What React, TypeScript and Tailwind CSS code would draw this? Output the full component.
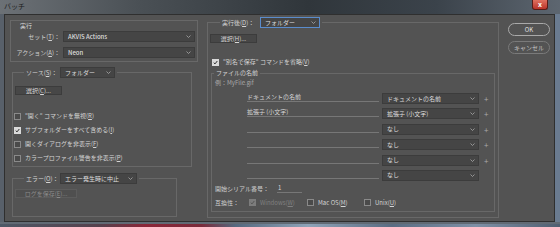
import React from "react";

const Chevron: React.FC = () => (
  <svg width="5" height="3" viewBox="0 0 5 3" className="shrink-0">
    <path d="M0.5 0.5 L2.5 2.5 L4.5 0.5" fill="none" stroke="#a8a8a8" strokeWidth="0.8" />
  </svg>
);

type SelectProps = { text: string; className: string; focused?: boolean };

const Select: React.FC<SelectProps> = ({ text, className, focused }) => (
  <div
    className={`flex h-[11px] items-center justify-between bg-[#454545] pl-[4px] pr-[3px] text-[#dedede] ${
      focused ? "border border-[#5a8ccc]" : "border border-[#3c3c3c]"
    } ${className}`}
  >
    <span className="leading-none">{text}</span>
    <Chevron />
  </div>
);

const Key: React.FC<{ k: string }> = ({ k }) => (
  <>
    (<span className="underline decoration-[0.5px] underline-offset-[1px]">{k}</span>)
  </>
);

type CheckProps = { checked?: boolean; disabled?: boolean };

const Check: React.FC<CheckProps> = ({ checked, disabled }) => {
  if (!checked) {
    return <div className="h-[7px] w-[7px] shrink-0 border border-[#8a8a8a] bg-[#4a4a4a]" />;
  }
  return (
    <div
      className={`flex h-[7px] w-[7px] shrink-0 items-center justify-center ${
        disabled ? "bg-[#7c7c7c]" : "bg-[#dadada]"
      }`}
    >
      <svg width="5" height="5" viewBox="0 0 5 5">
        <path
          d="M0.7 2.6 L2 3.9 L4.3 1"
          fill="none"
          stroke={disabled ? "#555" : "#2e2e2e"}
          strokeWidth="1"
        />
      </svg>
    </div>
  );
};

const CheckRow: React.FC<{ checked?: boolean; children: React.ReactNode }> = ({ checked, children }) => (
  <div className="flex h-[10px] items-center gap-[4px] pl-[1px]">
    <Check checked={checked} />
    <span className="leading-none text-[#d4d4d4]">{children}</span>
  </div>
);

const Button: React.FC<{ className: string; disabled?: boolean; children: React.ReactNode }> = ({
  className,
  disabled,
  children,
}) => (
  <div
    className={`flex h-[9px] items-center justify-center leading-none ${
      disabled
        ? "border border-[#5c5c5c] bg-[#4f4f4f] text-[#8a8a8a]"
        : "border border-[#3c3c3c] bg-[#474747] text-[#d8d8d8]"
    } ${className}`}
  >
    {children}
  </div>
);

const nameRows = [
  { text: "ドキュメントの名前", sel: "ドキュメントの名前", plus: true },
  { text: "拡張子 (小文字)", sel: "拡張子 (小文字)", plus: true },
  { text: "", sel: "なし", plus: true },
  { text: "", sel: "なし", plus: true },
  { text: "", sel: "なし", plus: true },
  { text: "", sel: "なし", plus: false },
];

export default function App() {
  return (
    <div className="flex h-[227px] w-[560px] flex-col overflow-hidden bg-[#5b6673] font-['Noto_Sans_CJK_JP',sans-serif] text-[6px]">
      {/* title bar */}
      <div className="flex h-[14px] shrink-0 items-start justify-between bg-[linear-gradient(to_right,#6c7176,#4a5055_25%,#30363b_55%,#3b434b_78%,#5d6670)]">
        <span className="pl-[4px] pt-[3px] text-[7px] leading-none text-[#1c1c1c]">バッチ</span>
        <div className="mr-[12px] flex h-[10px] w-[16px] items-center justify-center rounded-b-[3px] border border-t-0 border-[#5a1c16] bg-[linear-gradient(to_bottom,#e0705f,#b9342a)] text-[7px] font-bold leading-none text-white">
          x
        </div>
      </div>

      {/* window body */}
      <div className="flex shrink-0">
        <div className="w-[4px] bg-[#58606a]" />
        <div className="flex h-[208px] w-[551px] border border-[#2f2f2f] bg-[#535353]">
          {/* left column */}
          <div className="ml-[5px] mt-[5px] flex w-[188px] flex-col">
            <div className="flex h-[42px] flex-col border border-[#686868]">
              <div className="h-[10px] pl-[9px] pt-[2px] leading-none text-[#d8d8d8]">実行</div>
              <div className="flex items-center">
                <span className="w-[49px] text-right leading-none text-[#cfcfcf]">
                  セット<Key k="T" />：
                </span>
                <Select text="AKVIS Actions" className="ml-[3px] w-[132px] font-medium" />
              </div>
              <div className="mt-[5px] flex items-center">
                <span className="w-[49px] text-right leading-none text-[#cfcfcf]">
                  アクション<Key k="A" />：
                </span>
                <Select text="Neon" className="ml-[3px] w-[132px] font-medium" />
              </div>
            </div>

            <fieldset className="ml-[2px] mt-[5px] w-[180px] border border-[#686868] pb-[3px]">
              <legend className="ml-[11px] flex items-center px-[2px]">
                <span className="w-[34px] leading-none text-[#d4d4d4]">
                  ソース<Key k="S" />：
                </span>
                <Select text="フォルダー" className="w-[55px]" />
              </legend>
              <Button className="ml-[2px] mt-[8px] w-[47px]">
                選択<Key k="C" />...
              </Button>
              <div className="mt-[16px] flex flex-col gap-[4px]">
                <CheckRow>
                  "開く" コマンドを無視<Key k="R" />
                </CheckRow>
                <CheckRow checked>
                  サブフォルダーをすべて含める<Key k="I" />
                </CheckRow>
                <CheckRow>
                  開くダイアログを非表示<Key k="F" />
                </CheckRow>
                <CheckRow>
                  カラープロファイル警告を非表示<Key k="P" />
                </CheckRow>
              </div>
            </fieldset>

            <fieldset className="ml-[2px] mt-[6px] h-[44px] w-[165px] border border-[#686868]">
              <legend className="ml-[11px] flex items-center px-[2px]">
                <span className="w-[34px] leading-none text-[#d4d4d4]">
                  エラー<Key k="O" />：
                </span>
                <Select text="エラー発生時に中止" className="w-[77px]" />
              </legend>
              <Button disabled className="ml-[2px] mt-[5px] w-[62px]">
                ログを保存<Key k="E" />...
              </Button>
            </fieldset>
          </div>

          {/* destination column */}
          <fieldset className="ml-[9px] mt-[2px] h-[201px] w-[292px] border border-[#686868]">
            <legend className="ml-[12px] flex items-center px-[2px]">
              <span className="w-[38px] leading-none text-[#d4d4d4]">
                実行後<Key k="D" />：
              </span>
              <Select text="フォルダー" focused className="w-[60px]" />
            </legend>
            <Button className="ml-[2px] mt-[6px] w-[47px]">
              選択<Key k="H" />...
            </Button>
            <div className="mt-[14px] pl-[3px]">
              <CheckRow checked>
                "別名で保存" コマンドを省略<Key k="V" />
              </CheckRow>
            </div>

            <fieldset className="ml-[3px] mt-[3px] h-[142px] w-[284px] border border-[#686868]">
              <legend className="ml-[2px] px-[2px] leading-none text-[#d4d4d4]">ファイルの名前</legend>
              <div className="ml-[3px] mt-[4px] h-[8px] leading-none text-[#a9a9a9]">例：MyFile.gif</div>
              <div className="mt-[5px] flex flex-col gap-[4.4px]">
                {nameRows.map((r, i) => (
                  <div key={i} className="flex h-[11px] items-start">
                    <div className="ml-[35px] flex h-[9px] w-[132px] items-center border-b border-[#777777] leading-none text-[#d6d6d6]">
                      {r.text}
                    </div>
                    <Select text={r.sel} className="ml-[3px] w-[97px]" />
                    {r.plus && (
                      <span className="ml-[5px] text-[8px] leading-[11px] text-[#a8a8a8]">+</span>
                    )}
                  </div>
                ))}
              </div>
              <div className="mt-[3px] flex h-[10px] items-center pl-[3px]">
                <span className="w-[62px] leading-none text-[#cfcfcf]">開始シリアル番号：</span>
                <div className="flex h-[8px] w-[25px] items-center border-b border-[#777777] pl-[1px] leading-none text-[#d8d8d8]">
                  1
                </div>
              </div>
              <div className="mt-[4px] flex h-[10px] items-center pl-[3px] leading-none">
                <span className="w-[34px] text-[#cfcfcf]">互換性：</span>
                <Check checked disabled />
                <span className="ml-[4px] w-[47px] text-[#808080]">
                  Windows<Key k="W" />
                </span>
                <Check />
                <span className="ml-[4px] w-[46px] text-[#d4d4d4]">
                  Mac OS<Key k="M" />
                </span>
                <Check />
                <span className="ml-[4px] text-[#d4d4d4]">
                  Unix<Key k="U" />
                </span>
              </div>
            </fieldset>
          </fieldset>

          {/* buttons */}
          <div className="ml-[9px] mt-[8px] flex w-[42px] flex-col gap-[5px]">
            <div className="flex h-[13px] items-center justify-center rounded-full border border-[#a9a9a9] leading-none text-[#e0e0e0]">
              OK
            </div>
            <div className="flex h-[13px] items-center justify-center rounded-full border border-[#7a7a7a] leading-none text-[#c4c4c4]">
              キャンセル
            </div>
          </div>
        </div>
        <div className="flex-1 bg-[#6a7b90]" />
      </div>

      {/* frame bottom and desktop */}
      <div className="h-[2px] shrink-0 bg-[#616a74]" />
      <div className="flex-1 bg-[linear-gradient(to_right,#4d5866,#56404c_18%,#8c2638_26%,#7a2a3a_36%,#55687e_42%,#8ea3b8_55%,#5a6c82_70%,#7e90a6_85%,#4f5e70)]" />
    </div>
  );
}
